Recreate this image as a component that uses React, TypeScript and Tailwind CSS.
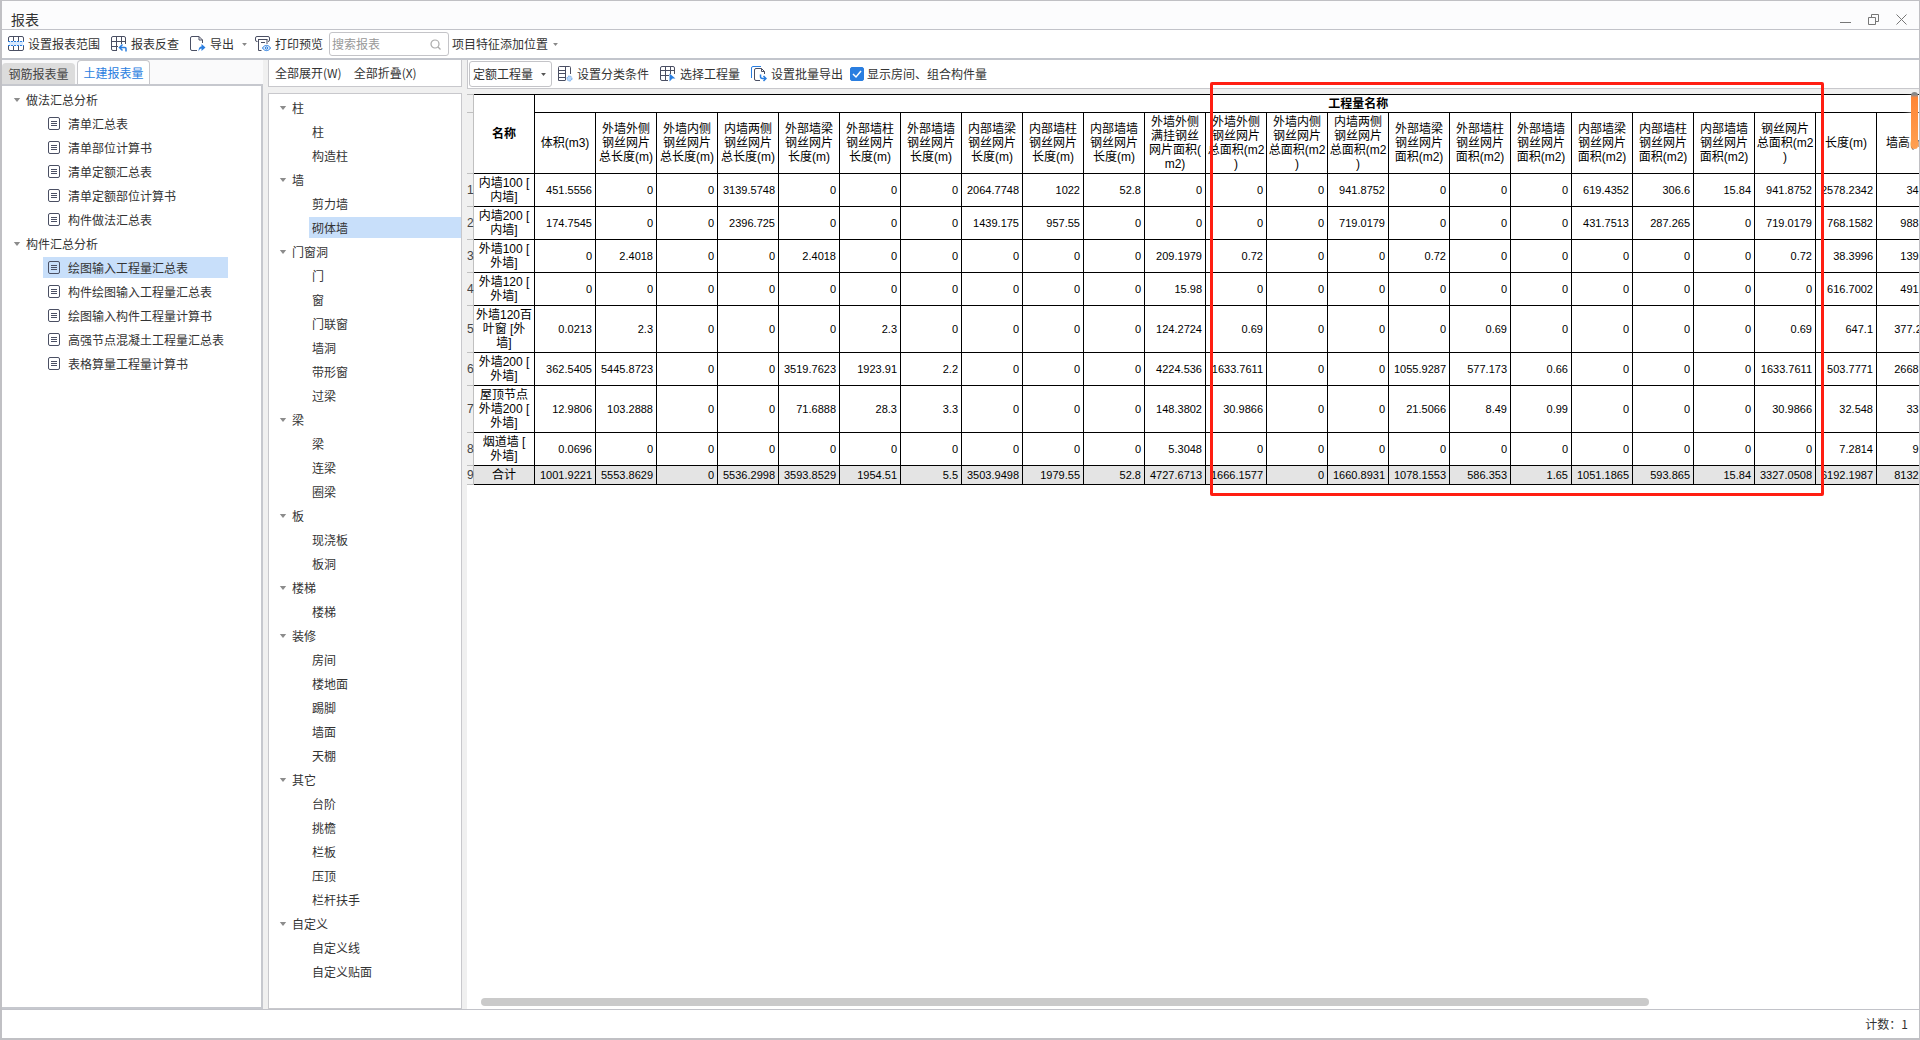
import { useState, type ReactNode } from "react";
import clsx from "clsx";

interface TreeGroup {
  name: string;
  items: string[];
}

const reportTree: TreeGroup[] = [
  {
    name: "做法汇总分析",
    items: ["清单汇总表", "清单部位计算书", "清单定额汇总表", "清单定额部位计算书", "构件做法汇总表"],
  },
  {
    name: "构件汇总分析",
    items: [
      "绘图输入工程量汇总表",
      "构件绘图输入工程量汇总表",
      "绘图输入构件工程量计算书",
      "高强节点混凝土工程量汇总表",
      "表格算量工程量计算书",
    ],
  },
];

const componentTree: TreeGroup[] = [
  { name: "柱", items: ["柱", "构造柱"] },
  { name: "墙", items: ["剪力墙", "砌体墙"] },
  { name: "门窗洞", items: ["门", "窗", "门联窗", "墙洞", "带形窗", "过梁"] },
  { name: "梁", items: ["梁", "连梁", "圈梁"] },
  { name: "板", items: ["现浇板", "板洞"] },
  { name: "楼梯", items: ["楼梯"] },
  { name: "装修", items: ["房间", "楼地面", "踢脚", "墙面", "天棚"] },
  { name: "其它", items: ["台阶", "挑檐", "栏板", "压顶", "栏杆扶手"] },
  { name: "自定义", items: ["自定义线", "自定义贴面"] },
];

const QUANTITY_COLUMNS = 27;

const columns = [
  "体积(m3)",
  "外墙外侧\n钢丝网片\n总长度(m)",
  "外墙内侧\n钢丝网片\n总长度(m)",
  "内墙两侧\n钢丝网片\n总长度(m)",
  "外部墙梁\n钢丝网片\n长度(m)",
  "外部墙柱\n钢丝网片\n长度(m)",
  "外部墙墙\n钢丝网片\n长度(m)",
  "内部墙梁\n钢丝网片\n长度(m)",
  "内部墙柱\n钢丝网片\n长度(m)",
  "内部墙墙\n钢丝网片\n长度(m)",
  "外墙外侧\n满挂钢丝\n网片面积(\nm2)",
  "外墙外侧\n钢丝网片\n总面积(m2\n)",
  "外墙内侧\n钢丝网片\n总面积(m2\n)",
  "内墙两侧\n钢丝网片\n总面积(m2\n)",
  "外部墙梁\n钢丝网片\n面积(m2)",
  "外部墙柱\n钢丝网片\n面积(m2)",
  "外部墙墙\n钢丝网片\n面积(m2)",
  "内部墙梁\n钢丝网片\n面积(m2)",
  "内部墙柱\n钢丝网片\n面积(m2)",
  "内部墙墙\n钢丝网片\n面积(m2)",
  "钢丝网片\n总面积(m2\n)",
  "长度(m)",
  "墙高(m)",
];

const rows: { name: string; values: string }[] = [
  {
    name: "内墙100 [\n内墙]",
    values: "451.5556 0 0 3139.5748 0 0 0 2064.7748 1022 52.8 0 0 0 941.8752 0 0 0 619.4352 306.6 15.84 941.8752 2578.2342 34.22",
  },
  {
    name: "内墙200 [\n内墙]",
    values: "174.7545 0 0 2396.725 0 0 0 1439.175 957.55 0 0 0 0 719.0179 0 0 0 431.7513 287.265 0 719.0179 768.1582 988.22",
  },
  {
    name: "外墙100 [\n外墙]",
    values: "0 2.4018 0 0 2.4018 0 0 0 0 0 209.1979 0.72 0 0 0.72 0 0 0 0 0 0.72 38.3996 139.22",
  },
  {
    name: "外墙120 [\n外墙]",
    values: "0 0 0 0 0 0 0 0 0 0 15.98 0 0 0 0 0 0 0 0 0 0 616.7002 491.22",
  },
  {
    name: "外墙120百\n叶窗 [外\n墙]",
    values: "0.0213 2.3 0 0 0 2.3 0 0 0 0 124.2724 0.69 0 0 0 0.69 0 0 0 0 0.69 647.1 377.225",
  },
  {
    name: "外墙200 [\n外墙]",
    values: "362.5405 5445.8723 0 0 3519.7623 1923.91 2.2 0 0 0 4224.536 1633.7611 0 0 1055.9287 577.173 0.66 0 0 0 1633.7611 503.7771 2668.22",
  },
  {
    name: "屋顶节点\n外墙200 [\n外墙]",
    values: "12.9806 103.2888 0 0 71.6888 28.3 3.3 0 0 0 148.3802 30.9866 0 0 21.5066 8.49 0.99 0 0 0 30.9866 32.548 33.22",
  },
  {
    name: "烟道墙 [\n外墙]",
    values: "0.0696 0 0 0 0 0 0 0 0 0 5.3048 0 0 0 0 0 0 0 0 0 0 7.2814 9.22",
  },
  {
    name: "合计",
    values: "1001.9221 5553.8629 0 5536.2998 3593.8529 1954.51 5.5 3503.9498 1979.55 52.8 4727.6713 1666.1577 0 1660.8931 1078.1553 586.353 1.65 1051.1865 593.865 15.84 3327.0508 6192.1987 8132.25",
  },
];

function rowHeight(name: string) {
  const lines = name.split("\n").length;
  if (lines === 1) return "h-[19px]";
  return lines === 2 ? "h-[33px]" : "h-[47px]";
}

function Caret({ className }: { className?: string }) {
  return (
    <svg viewBox="0 0 8 5" className={clsx("shrink-0", className)} fill="currentColor">
      <path d="M0 0h8L4 5z" />
    </svg>
  );
}

function Icon({ children }: { children: ReactNode }) {
  return (
    <svg viewBox="0 0 16 16" className="size-4 shrink-0" fill="none" stroke="#4a4f63">
      {children}
    </svg>
  );
}

function RangeIcon() {
  return (
    <Icon>
      <path d="M1 5h14v5H1z" fill="#d6e8fd" stroke="none" />
      <path d="M.5 5V2A1.500 1.500 0 0 1 2 .5h12A1.500 1.500 0 0 1 15.500 2v3M.5 10v3A1.500 1.500 0 0 0 2 14.500h12a1.500 1.500 0 0 0 1.500-1.500v-3M5.500.5V5M10.500.5V5M5.500 10v4.500M10.500 10v4.500" />
      <path d="M0 5.500h16M0 9.500h16" stroke="#2a7ee0" strokeDasharray="2 1" />
    </Icon>
  );
}

function CheckReportIcon() {
  return (
    <Icon>
      <path d="M6 14.500H2a1.500 1.500 0 0 1-1.500-1.500V2A1.500 1.500 0 0 1 2 .5h11A1.500 1.500 0 0 1 14.500 2v6M5.500.5v14M10.500.5V8M.5 5.500h14M.5 10.500H7" />
      <path d="M15 15.500v-3a1 1 0 0 0-1-1H9M11.500 8.500l-3 3 3 3" stroke="#2a7ee0" strokeWidth="1.500" />
    </Icon>
  );
}

function ExportIcon() {
  return (
    <Icon>
      <path d="M12.500 7V4L9 .5H2A1.500 1.500 0 0 0 .5 2v11A1.500 1.500 0 0 0 2 14.500h5M9 .5V4h3.500" />
      <path d="M8.500 15.500c0-3.500 1-5 3-5V8l4 3.500-4 3.500v-2.500c-1.500 0-2 1-3 3z" fill="#2a7ee0" stroke="none" />
    </Icon>
  );
}

function PrintPreviewIcon() {
  return (
    <Icon>
      <path d="M2.500 5.500H2A1.500 1.500 0 0 1 .5 4V2A1.500 1.500 0 0 1 2 .5h11A1.500 1.500 0 0 1 14.500 2v2A1.500 1.500 0 0 1 13 5.500M3 3.500h9.500M3.500 3.500v11h3M12 3.500V8M6 6.500h4" />
      <path d="M7.500 12c2-3.500 6-3.500 8 0-2 3.500-6 3.500-8 0z" stroke="#2a7ee0" fill="#e4f0fd" />
      <circle cx="11.500" cy="12" r="1.200" stroke="#2a7ee0" />
    </Icon>
  );
}

function ClassifyIcon() {
  return (
    <Icon>
      <path d="M8 14.500H1.500V1.500a1 1 0 0 1 1-1h10a1 1 0 0 1 1 1V8M8.500.5v14M1.500 4.500h7M1.500 7.500h7M1.500 11.500h7" />
      <circle cx="12.500" cy="12.500" r="2.500" fill="#b9d7fa" stroke="#5f9fe8" strokeDasharray="1.500 1" />
    </Icon>
  );
}

function PickQuantityIcon() {
  return (
    <Icon>
      <path d="M8 14.500H2A1.500 1.500 0 0 1 .5 13V2A1.500 1.500 0 0 1 2 .5h11A1.500 1.500 0 0 1 14.500 2v6M5.500.5v14M10.500.5V8M.5 4.500h14M.5 9.500H9" />
      <path d="M9.500 7.500l6 5h-3l-3 3z" fill="#2a7ee0" stroke="none" />
    </Icon>
  );
}

function BatchExportIcon() {
  return (
    <Icon>
      <path d="M.5 12V2A1.500 1.500 0 0 1 2 .5h8" stroke="#2a7ee0" />
      <path d="M13.500 8V5.500l-3-3H5A1.500 1.500 0 0 0 3.500 4v9A1.500 1.500 0 0 0 5 14.500h4M10.500 2.500v3h3" />
      <path d="M9.500 8.500v2a2 2 0 0 0 2 2H15M12.500 10l2.500 2.500-2.500 2.500" stroke="#2a7ee0" strokeWidth="1.500" />
    </Icon>
  );
}

function ReportIcon() {
  return (
    <svg viewBox="0 0 12 13" className="h-[13px] w-3 shrink-0" fill="none" stroke="#4a4f63">
      <rect x=".5" y=".5" width="11" height="12" rx="1.500" />
      <path d="M3 4.500h6M3 6.500h6M3 8.500h6" />
    </svg>
  );
}

interface TreeProps {
  groups: TreeGroup[];
  selected: string;
  onSelect: (key: string) => void;
  groupClass: string;
  itemClass: string;
  withIcon?: boolean;
}

function Tree({ groups, selected, onSelect, groupClass, itemClass, withIcon }: TreeProps) {
  return (
    <ul>
      {groups.map((group) => (
        <li key={group.name}>
          <button className={clsx("mb-[3px] flex h-[21px] items-center gap-x-[5px]", groupClass)}>
            <Caret className="h-1 w-2 text-[#8c8c8c]" />
            {group.name}
          </button>
          <ul>
            {group.items.map((item) => {
              const key = `${group.name}/${item}`;
              return (
                <li key={key}>
                  <button
                    onClick={() => onSelect(key)}
                    className={clsx(
                      "mb-[3px] flex h-[21px] items-center gap-x-2",
                      itemClass,
                      key === selected && "bg-[#c8dffa]",
                    )}
                  >
                    {withIcon && <ReportIcon />}
                    {item}
                  </button>
                </li>
              );
            })}
          </ul>
        </li>
      ))}
    </ul>
  );
}

function QuantityTable() {
  return (
    <table className="w-[1715px] table-fixed border-separate border-spacing-0 font-['Liberation_Sans','Noto_Sans_CJK_SC',sans-serif] text-xs leading-[14px] text-black">
      <colgroup>
        <col className="w-[7px]" />
        <col className="w-[61px]" />
        {Array.from({ length: QUANTITY_COLUMNS }, (_, i) => (
          <col key={i} className="w-[61px]" />
        ))}
      </colgroup>
      <thead>
        <tr className="h-[19px]">
          <td className="border-t border-r border-b border-[#c0c0c0] bg-[#f0f0f0] p-0" />
          <th rowSpan={2} className="border-t border-r border-b p-0">
            名称
          </th>
          <th colSpan={QUANTITY_COLUMNS} className="border-t border-r border-b p-0">
            工程量名称
          </th>
        </tr>
        <tr className="h-[61px]">
          <td className="border-r border-b border-[#c0c0c0] bg-[#f0f0f0] p-0" />
          {columns.map((column) => (
            <th key={column} className="border-r border-b p-0 font-normal whitespace-pre">
              {column}
            </th>
          ))}
        </tr>
      </thead>
      <tbody>
        {rows.map((row, index) => (
          <tr key={row.name} className={clsx(rowHeight(row.name), row.name === "合计" && "bg-[#e4e4e4]")}>
            <td className="border-r border-b border-[#c0c0c0] bg-[#f0f0f0] p-0 text-center text-[#444]">
              {index + 1}
            </td>
            <th className="border-r border-b p-0 font-normal whitespace-pre">{row.name}</th>
            {row.values.split(" ").map((value, i) => (
              <td key={i} className="border-r border-b p-0 pr-[3px] text-right text-[11px]">
                {value}
              </td>
            ))}
          </tr>
        ))}
      </tbody>
    </table>
  );
}

export default function App() {
  const [report, setReport] = useState("构件汇总分析/绘图输入工程量汇总表");
  const [component, setComponent] = useState("墙/砌体墙");
  const [showRooms, setShowRooms] = useState(true);

  return (
    <div className="relative flex h-screen flex-col overflow-hidden border border-b-2 border-l-2 border-[#c0c0c4] bg-white font-['Noto_Sans_CJK_SC',sans-serif] text-xs text-[#333]">
      <header className="flex h-[29px] shrink-0 items-center justify-between border-b border-[#c2c3c9] bg-[#fcfcfd] pr-3 pl-[9px]">
        <h1 className="pt-2 text-sm leading-[18px]">报表</h1>
        <div className="flex items-center gap-x-[17px] pt-2 text-[#777]">
          <button aria-label="最小化">
            <svg viewBox="0 0 11 11" className="size-[11px]" fill="none" stroke="currentColor">
              <path d="M0 8.500h11" />
            </svg>
          </button>
          <button aria-label="还原">
            <svg viewBox="0 0 11 11" className="size-[11px]" fill="none" stroke="currentColor">
              <path d="M.5 3.500h7v7h-7zM3.500 3V.5h7v7H8" />
            </svg>
          </button>
          <button aria-label="关闭">
            <svg viewBox="0 0 11 11" className="size-[11px]" fill="none" stroke="currentColor">
              <path d="M.5.5l10 10M10.500.5l-10 10" />
            </svg>
          </button>
        </div>
      </header>

      <div className="flex h-[30px] shrink-0 items-center border-b-2 border-[#c2c5cc] pl-1.5">
        <button className="flex items-center gap-x-1">
          <RangeIcon />
          设置报表范围
        </button>
        <button className="ml-[11px] flex items-center gap-x-1">
          <CheckReportIcon />
          报表反查
        </button>
        <button className="ml-[11px] flex items-center gap-x-1">
          <ExportIcon />
          导出
          <Caret className="ml-1 h-[3px] w-[5px] text-[#888]" />
        </button>
        <button className="ml-2 flex items-center gap-x-1">
          <PrintPreviewIcon />
          打印预览
        </button>
        <label className="ml-1.5 flex h-6 w-[120px] items-center justify-between rounded-[3px] border border-[#c4c4c8] pr-[7px] pl-0.5">
          <input
            type="search"
            placeholder="搜索报表"
            aria-label="搜索报表"
            className="w-20 outline-none placeholder:text-[#999]"
          />
          <svg viewBox="0 0 11 11" className="size-[11px]" fill="none" stroke="#aaa" strokeWidth="1.200">
            <circle cx="5" cy="5" r="4" />
            <path d="M8 8l2.500 2.500" />
          </svg>
        </label>
        <button className="ml-[3px] flex items-center gap-x-[5px]">
          项目特征添加位置
          <Caret className="h-[3px] w-[5px] text-[#888]" />
        </button>
      </div>

      <main className="flex min-h-0 flex-1 bg-[#f0f0f0]">
        <aside className="flex w-[261px] shrink-0 flex-col">
          <div className="flex h-6 shrink-0 items-end gap-x-0.5 bg-[#fafafb]">
            <button className="h-[21px] w-[73px] rounded-t bg-[#dcdcdc] text-[#444]">钢筋报表量</button>
            <button className="h-6 w-[73px] rounded-t border border-b-0 border-[#c8c8cc] bg-white text-[#2a7ee0]">
              土建报表量
            </button>
          </div>
          <nav className="flex-1 border-y-2 border-r-2 border-[#c6c8ce] bg-white pt-[3px]">
            <Tree
              groups={reportTree}
              selected={report}
              onSelect={setReport}
              groupClass="ml-[11px]"
              itemClass="ml-[41px] min-w-[185px] pl-[5px]"
              withIcon
            />
          </nav>
        </aside>

        <section className="ml-[5px] flex w-[194px] shrink-0 flex-col">
          <div className="flex h-[27px] shrink-0 items-center gap-x-3 border border-t-0 border-[#c8c8cc] bg-white pl-1.5">
            <button>全部展开(W)</button>
            <button>全部折叠(X)</button>
          </div>
          <nav className="mt-1.5 flex-1 border border-[#c8c8cc] bg-white pt-[3px]">
            <Tree
              groups={componentTree}
              selected={component}
              onSelect={setComponent}
              groupClass="ml-2.5"
              itemClass="ml-10 w-[152px] pl-[3px]"
            />
          </nav>
        </section>

        <section className="ml-[5px] flex min-w-0 flex-1 flex-col">
          <div className="flex h-[29px] shrink-0 items-center border-b border-l border-[#c8c8cc] bg-white pl-px">
            <div className="grid h-[26px] w-[83px] items-center rounded-[3px] border border-[#c4c4c8]">
              <select
                aria-label="工程量类型"
                className="col-start-1 row-start-1 h-full appearance-none pl-[3px] outline-none"
              >
                <option>定额工程量</option>
              </select>
              <Caret className="pointer-events-none col-start-1 row-start-1 mr-[5px] h-[3px] w-[5px] justify-self-end text-[#555]" />
            </div>
            <button className="ml-[5px] flex items-center gap-x-1">
              <ClassifyIcon />
              设置分类条件
            </button>
            <button className="ml-[11px] flex items-center gap-x-1">
              <PickQuantityIcon />
              选择工程量
            </button>
            <button className="ml-[11px] flex items-center gap-x-1">
              <BatchExportIcon />
              设置批量导出
            </button>
            <label className="ml-[7px] flex items-center gap-x-[3px]">
              <span className="grid">
                <input
                  type="checkbox"
                  checked={showRooms}
                  onChange={() => setShowRooms(!showRooms)}
                  className="peer col-start-1 row-start-1 size-3.5 appearance-none rounded-xs border border-[#2a7ee0] checked:bg-[#2a7ee0]"
                />
                <svg
                  viewBox="0 0 14 14"
                  className="pointer-events-none invisible col-start-1 row-start-1 size-3.5 peer-checked:visible"
                  fill="none"
                  stroke="white"
                  strokeWidth="1.500"
                >
                  <path d="M3 7l3 3 5-6" />
                </svg>
              </span>
              显示房间、组合构件量
            </label>
          </div>
          <div className="mt-[5px] flex min-h-0 flex-1 flex-col justify-between overflow-hidden bg-white">
            <QuantityTable />
            <div className="mx-3.5 mb-[3px] shrink-0">
              <div className="h-2 w-[82%] rounded-full bg-[#cacaca]" />
            </div>
          </div>
        </section>
      </main>

      <footer className="flex h-[29px] shrink-0 items-center justify-end border-t border-[#c2c3c9] pr-[11px]">
        计数：1
      </footer>

      {/* annotation drawn over the area columns */}
      <div className="pointer-events-none absolute top-[81px] left-[1208px] h-[414px] w-[614px] rounded-xs border-3 border-[#ff1e12]" />
      <div className="pointer-events-none absolute top-[91px] right-px h-[57px] w-[7px] rounded-full bg-linear-to-b from-[#888] from-5% via-[#ff8636] via-10% to-[#ffa050] shadow-[0_4px_8px_rgba(255,255,255,0.9)]" />
    </div>
  );
}
